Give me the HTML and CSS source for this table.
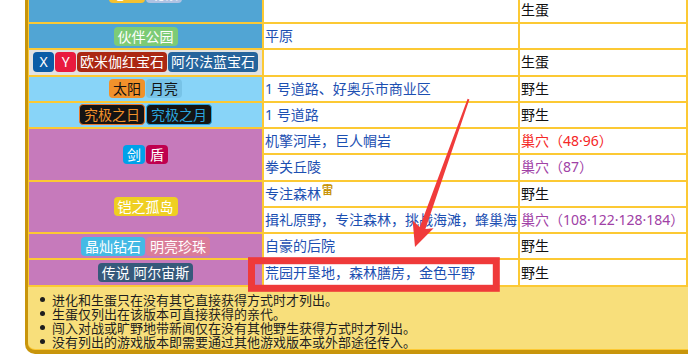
FILE: index.html
```html
<!DOCTYPE html>
<html lang="zh-CN">
<head>
<meta charset="utf-8">
<title>获得方式</title>
<link rel="stylesheet" href="styles.css">
</head>
<body>
<div class="panel">
  <table class="enc">
    <colgroup><col class="c1"><col class="c2"><col class="c3"></colgroup>
    <tr>
      <td class="g g-blue g-top" rowspan="2"><div class="badges"><span class="b b-hg">心金</span><span class="b b-ss">魂银</span></div></td>
      <td class="loc"></td>
      <td class="how"></td>
    </tr>
    <tr>
      <td class="loc"></td>
      <td class="how link">生蛋</td>
    </tr>
    <tr>
      <td class="g g-blue"><div class="badges"><span class="b b-go">伙伴公园</span></div></td>
      <td class="loc link">平原</td>
      <td class="how"></td>
    </tr>
    <tr>
      <td class="g g-gray"><div class="badges tight"><span class="b b-x">X</span><span class="b b-y">Y</span><span class="b b-or">欧米伽红宝石</span><span class="b b-as">阿尔法蓝宝石</span></div></td>
      <td class="loc"></td>
      <td class="how link">生蛋</td>
    </tr>
    <tr>
      <td class="g g-sky"><div class="badges"><span class="b b-sun">太阳</span><span class="b b-moon">月亮</span></div></td>
      <td class="loc link">1 号道路、好奥乐市商业区</td>
      <td class="how">野生</td>
    </tr>
    <tr>
      <td class="g g-sky"><div class="badges"><span class="b b-us">究极之日</span><span class="b b-um">究极之月</span></div></td>
      <td class="loc link">1 号道路</td>
      <td class="how">野生</td>
    </tr>
    <tr>
      <td class="g g-purple" rowspan="2"><div class="badges"><span class="b b-sw">剑</span><span class="b b-sh">盾</span></div></td>
      <td class="loc link">机擎河岸，巨人帽岩</td>
      <td class="how den-red">巢穴（48·96）</td>
    </tr>
    <tr>
      <td class="loc link">拳关丘陵</td>
      <td class="how den">巢穴（87）</td>
    </tr>
    <tr>
      <td class="g g-purple" rowspan="2"><div class="badges"><span class="b b-ioa">铠之孤岛</span></div></td>
      <td class="loc link">专注森林<sup class="storm">雷</sup></td>
      <td class="how">野生</td>
    </tr>
    <tr>
      <td class="loc link">揖礼原野，专注森林，挑战海滩，蜂巢海</td>
      <td class="how den">巢穴（108·122·128·184）</td>
    </tr>
    <tr>
      <td class="g g-purple"><div class="badges"><span class="b b-bd">晶灿钻石</span><span class="b b-sp">明亮珍珠</span></div></td>
      <td class="loc link">自豪的后院</td>
      <td class="how">野生</td>
    </tr>
    <tr>
      <td class="g g-purple"><div class="badges"><span class="b b-la">传说 阿尔宙斯</span></div></td>
      <td class="loc link">荒园开垦地，森林膳房，金色平野</td>
      <td class="how">野生</td>
    </tr>
  </table>
  <div class="notes">
    <ul>
      <li>进化和生蛋只在没有其它直接获得方式时才列出。</li>
      <li>生蛋仅列出在该版本可直接获得的亲代。</li>
      <li>闯入对战或旷野地带新闻仅在没有其他野生获得方式时才列出。</li>
      <li>没有列出的游戏版本即需要通过其他游戏版本或外部途径传入。</li>
    </ul>
  </div>
</div>
<svg class="annot" width="688" height="360" viewBox="0 0 688 360" xmlns="http://www.w3.org/2000/svg">
  <rect x="251.5" y="260.7" width="244.8" height="27.6" fill="none" stroke="#ef3a3a" stroke-width="7"/>
  <polygon points="467.6,98.8 469.4,99.4 425.4,228.9 433.6,228.2 415,246.9 412.6,220.4 419.8,226.9" fill="#f03b3b"/>
</svg>
</body>
</html>
```

FILE: styles.css
```css
html, body {
  margin: 0;
  padding: 0;
  overflow: hidden;
  background: #ffffff;
}

body {
  width: 688px;
  height: 360px;
  position: relative;
  font-family: "Noto Sans", "Noto Sans CJK SC", sans-serif;
  font-size: 14px;
  color: #111;
}

.panel {
  margin: -30.54px 0 0 25px;
  width: 660px;
  border-left: 3px solid #c8950b;
  border-right: 3px solid #c8950b;
  border-bottom: 4px solid #c8950b;
  border-bottom-left-radius: 10px;
  background: #fcc934;
  overflow: hidden;
}

.enc {
  table-layout: fixed;
  width: 661px;
  margin-left: -1px;
  border-spacing: 2px;
}

.c1 { width: 233px; }
.c2 { width: 254px; }
.c3 { width: 166px; }

.enc td {
  height: 24.27px;
  padding: 0 1px;
  line-height: 20px;
  background: #ffffff;
  white-space: nowrap;
  overflow: hidden;
  vertical-align: middle;
  text-align: left;
}

.enc td.g { text-align: center; }
.enc td.g-top { padding-bottom: 6px; }
.g-blue { background: #51a5d4 !important; }
.g-gray { background: #e2e2e2 !important; }
.g-sky { background: #88d4f8 !important; }
.g-purple { background: #c67abb !important; }

.link { color: #1c4fb2; }
.how { color: #111; }
.den-red { color: #f52626; }
.den { color: #a041a6; }

.storm {
  font-size: 11px;
  line-height: 0;
  font-weight: bold;
  color: #c8940a;
  vertical-align: 5px;
  margin-left: 1px;
}

.badges {
  display: flex;
  justify-content: center;
  gap: 1px;
}

.b {
  flex-shrink: 0;
  display: inline-block;
  line-height: 19px;
  padding: 0 4px;
  border-radius: 4px;
  color: #ffffff;
}

.tight .b { padding: 0 3px; line-height: 20px; }
.tight .b-x, .tight .b-y { padding: 0 6.5px; }

.b-hg { background: #f4c131; }
.b-ss { background: #aec2e3; }
.b-go { background: #7ccb76; }
.b-x { background: #0a5ca6; }
.b-y { background: #e91a3e; }
.b-or { background: #ab2813; }
.b-as { background: #26649c; }
.b-sun { background: #f1912b; color: #111; }
.b-moon { background: #78c3e7; color: #111; }
.b-us {
  background: #141414;
  color: #f1912b;
  border: 1px solid #e9782b;
}
.b-um {
  background: #141414;
  color: #2aa4dd;
  border: 1px solid #2aa4dd;
}
.b-sw { background: #00a1e9; }
.b-sh { background: #bf004f; }
.b-ioa { background: #efcf22; }
.b-bd { background: #44bae5; }
.b-sp { background: #da7d99; }
.b-la { background: #36597b; }

.notes {
  margin: 0 0 1px 0;
  background: #f8df7b;
  border-bottom-left-radius: 7px;
}

.notes ul {
  margin: 0;
  padding: 6px 0 0 12px;
  list-style: none;
  font-size: 13px;
  line-height: 14px;
  color: #1e1e1e;
}

.notes li {
  display: flex;
  align-items: center;
}

.notes li::before {
  content: "";
  flex-shrink: 0;
  width: 5px;
  height: 5px;
  margin-right: 7px;
  border-radius: 50%;
  background: #1e1e1e;
}

.annot {
  position: absolute;
  top: 0;
  left: 0;
  pointer-events: none;
}
```
